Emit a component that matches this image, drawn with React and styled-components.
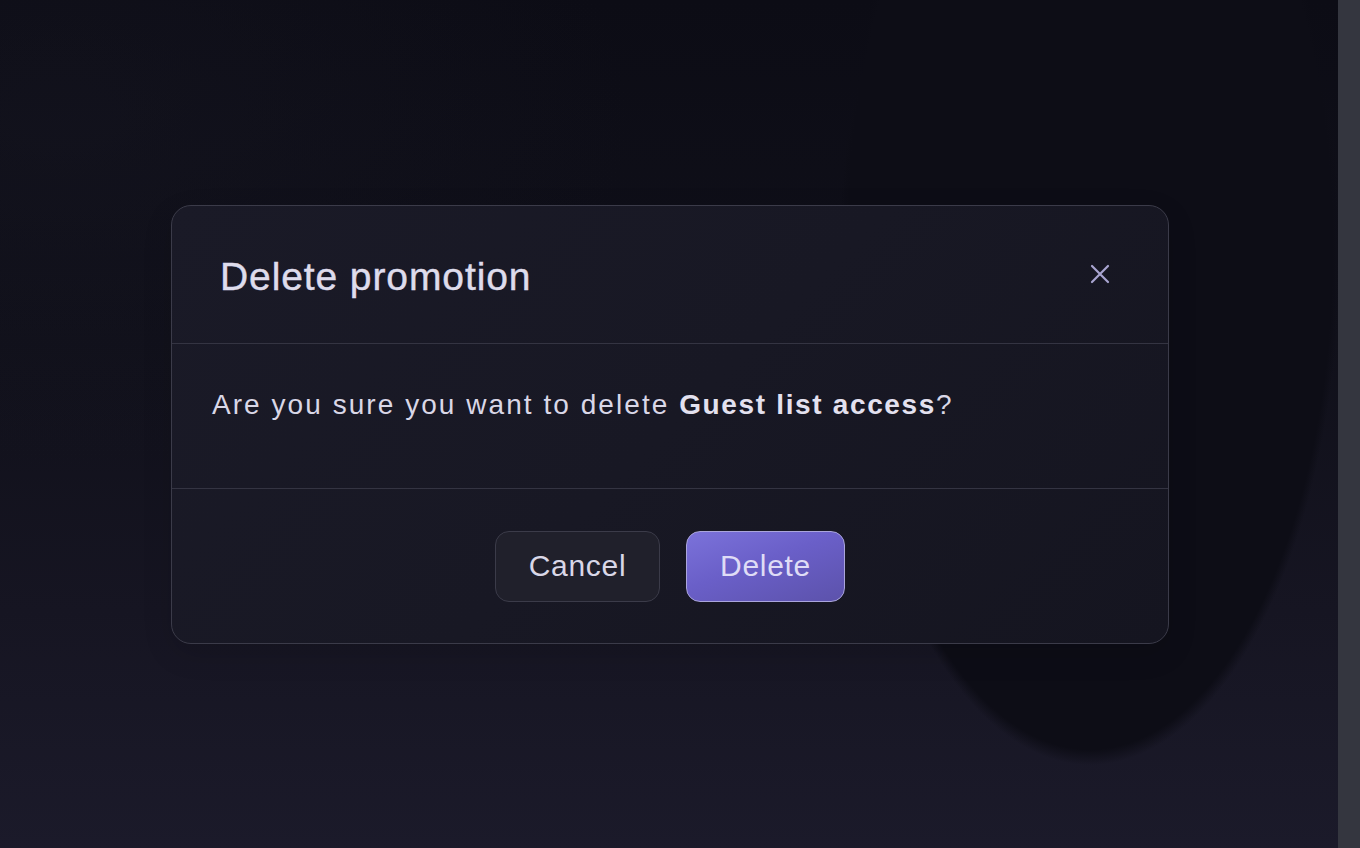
import React from "react";
import styled, { createGlobalStyle } from "styled-components";

const GlobalStyle = createGlobalStyle`
  html, body {
    margin: 0;
    padding: 0;
    background: #0d0d16;
    font-family: "Liberation Sans", Arial, sans-serif;
  }
`;

const Page = styled.div`
  display: flex;
  width: 1360px;
  height: 848px;
  overflow: hidden;
`;

const Backdrop = styled.div`
  flex: 1;
  display: flex;
  align-items: flex-start;
  justify-content: flex-start;
  padding: 205px 0 0 171px;
  background:
    radial-gradient(ellipse 250px 515px at 1090px 250px, #0d0d16 0%, #0d0d16 97%, rgba(13, 13, 22, 0) 100%),
    radial-gradient(ellipse 760px 460px at 60px 120px, rgba(24, 24, 36, 0.4), transparent 75%),
    linear-gradient(180deg, #0c0c15 0%, #10101a 40%, #161522 72%, #1b1a2a 100%);
`;

const Scrollbar = styled.div`
  width: 22px;
  background: #34363f;
`;

const Modal = styled.div`
  width: 998px;
  box-sizing: border-box;
  border: 1.5px solid #3b3b49;
  border-radius: 20px;
  background: linear-gradient(135deg, #1a1a27 0%, #181824 50%, #151520 100%);
  box-shadow: 0 10px 30px rgba(0, 0, 0, 0.12);
  overflow: hidden;
`;

const Header = styled.div`
  display: flex;
  align-items: center;
  justify-content: space-between;
  height: 137px;
  padding: 0 57px 0 48px;
  border-bottom: 1.5px solid #343442;
`;

const Title = styled.h2`
  margin: 0;
  padding-top: 5px;
  font-size: 39px;
  font-weight: 400;
  color: #dedcec;
  letter-spacing: 0.9px;
  -webkit-text-stroke: 0.45px #dedcec;
`;

const CloseButton = styled.button`
  display: flex;
  align-items: center;
  justify-content: center;
  width: 22px;
  height: 22px;
  padding: 0;
  margin-top: -1px;
  border: none;
  background: none;
  color: #a9a5d0;
  cursor: pointer;
`;

const Body = styled.div`
  height: 145px;
  box-sizing: border-box;
  padding: 45px 40px 0;
  border-bottom: 1.5px solid #343442;
  font-size: 28px;
  line-height: 32px;
  letter-spacing: 2.05px;
  color: #d9d7e7;

  strong {
    font-weight: 700;
    letter-spacing: 1.65px;
    color: #e3e1ef;
  }
`;

const Footer = styled.div`
  display: flex;
  justify-content: center;
  gap: 26px;
  padding: 41.5px 0 41px;
`;

const Button = styled.button`
  height: 71px;
  width: ${(p) => (p.$primary ? "159px" : "165px")};
  box-sizing: border-box;
  border-radius: 14px;
  font-family: "Liberation Sans", Arial, sans-serif;
  font-size: 30px;
  letter-spacing: 0.7px;
  color: ${(p) => (p.$primary ? "#dfdcf6" : "#d9d7e7")};
  border: 1.5px solid ${(p) => (p.$primary ? "#aaa5dc" : "#3b3b49")};
  background: ${(p) =>
    p.$primary
      ? "linear-gradient(160deg, #7b72da 0%, #6a5fc8 45%, #5c52ab 100%)"
      : "#20202b"};
  cursor: pointer;
`;

function CloseIcon() {
  return (
    <svg width="20" height="20" viewBox="0 0 20 20" fill="none">
      <path d="M2 2L18 18M18 2L2 18" stroke="currentColor" strokeWidth="2.2" strokeLinecap="round" />
    </svg>
  );
}

export default function App() {
  return (
    <>
      <GlobalStyle />
      <Page>
        <Backdrop>
          <Modal>
            <Header>
              <Title>Delete promotion</Title>
              <CloseButton aria-label="Close">
                <CloseIcon />
              </CloseButton>
            </Header>
            <Body>
              Are you sure you want to delete <strong>Guest list access</strong>?
            </Body>
            <Footer>
              <Button>Cancel</Button>
              <Button $primary>Delete</Button>
            </Footer>
          </Modal>
        </Backdrop>
        <Scrollbar />
      </Page>
    </>
  );
}
